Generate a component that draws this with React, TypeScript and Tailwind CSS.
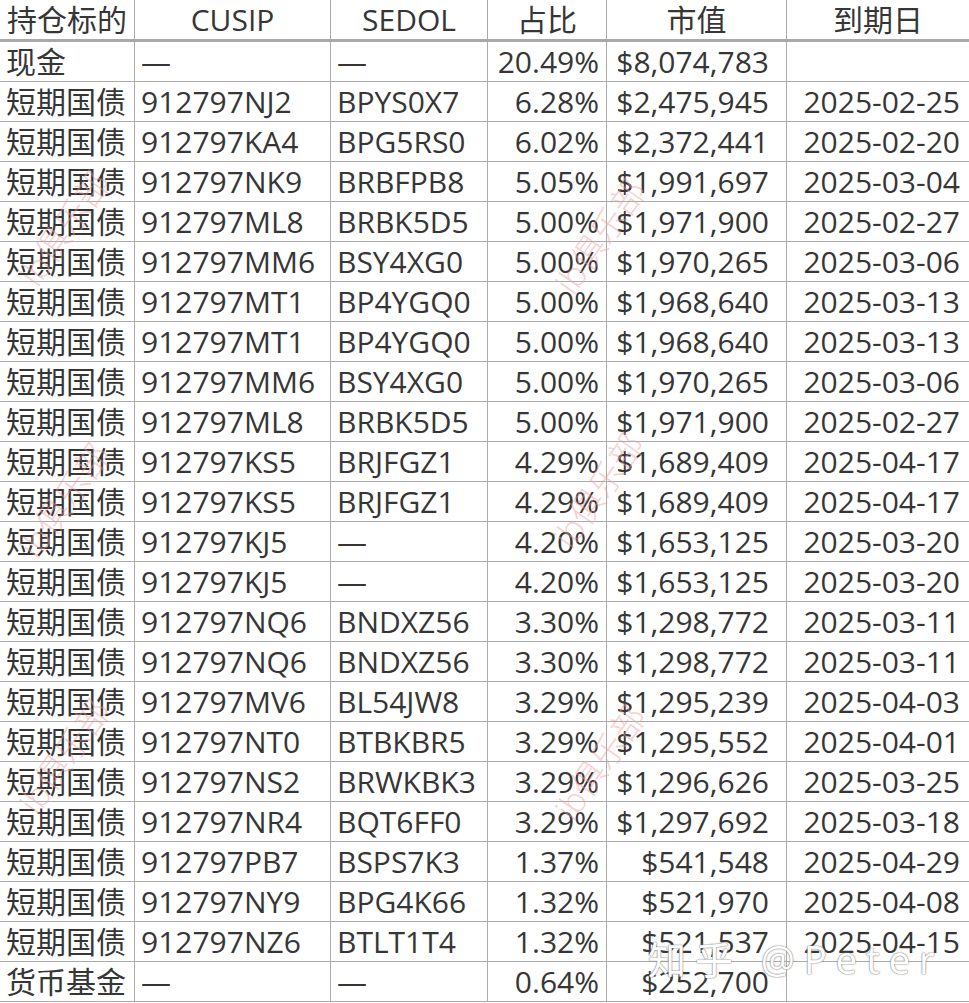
const rows: [string, string, string, string, string, string][] = [
  ["现金", "—", "—", "20.49%", "$8,074,783", ""],
  ["短期国债", "912797NJ2", "BPYS0X7", "6.28%", "$2,475,945", "2025-02-25"],
  ["短期国债", "912797KA4", "BPG5RS0", "6.02%", "$2,372,441", "2025-02-20"],
  ["短期国债", "912797NK9", "BRBFPB8", "5.05%", "$1,991,697", "2025-03-04"],
  ["短期国债", "912797ML8", "BRBK5D5", "5.00%", "$1,971,900", "2025-02-27"],
  ["短期国债", "912797MM6", "BSY4XG0", "5.00%", "$1,970,265", "2025-03-06"],
  ["短期国债", "912797MT1", "BP4YGQ0", "5.00%", "$1,968,640", "2025-03-13"],
  ["短期国债", "912797MT1", "BP4YGQ0", "5.00%", "$1,968,640", "2025-03-13"],
  ["短期国债", "912797MM6", "BSY4XG0", "5.00%", "$1,970,265", "2025-03-06"],
  ["短期国债", "912797ML8", "BRBK5D5", "5.00%", "$1,971,900", "2025-02-27"],
  ["短期国债", "912797KS5", "BRJFGZ1", "4.29%", "$1,689,409", "2025-04-17"],
  ["短期国债", "912797KS5", "BRJFGZ1", "4.29%", "$1,689,409", "2025-04-17"],
  ["短期国债", "912797KJ5", "—", "4.20%", "$1,653,125", "2025-03-20"],
  ["短期国债", "912797KJ5", "—", "4.20%", "$1,653,125", "2025-03-20"],
  ["短期国债", "912797NQ6", "BNDXZ56", "3.30%", "$1,298,772", "2025-03-11"],
  ["短期国债", "912797NQ6", "BNDXZ56", "3.30%", "$1,298,772", "2025-03-11"],
  ["短期国债", "912797MV6", "BL54JW8", "3.29%", "$1,295,239", "2025-04-03"],
  ["短期国债", "912797NT0", "BTBKBR5", "3.29%", "$1,295,552", "2025-04-01"],
  ["短期国债", "912797NS2", "BRWKBK3", "3.29%", "$1,296,626", "2025-03-25"],
  ["短期国债", "912797NR4", "BQT6FF0", "3.29%", "$1,297,692", "2025-03-18"],
  ["短期国债", "912797PB7", "BSPS7K3", "1.37%", "$541,548", "2025-04-29"],
  ["短期国债", "912797NY9", "BPG4K66", "1.32%", "$521,970", "2025-04-08"],
  ["短期国债", "912797NZ6", "BTLT1T4", "1.32%", "$521,537", "2025-04-15"],
  ["货币基金", "—", "—", "0.64%", "$252,700", ""],
];

const headers = ["持仓标的", "CUSIP", "SEDOL", "占比", "市值", "到期日"];

// 水印位置
const marks = [
  { left: 64, top: 228 },
  { left: 600, top: 236 },
  { left: 64, top: 500 },
  { left: 598, top: 490 },
  { left: 64, top: 756 },
  { left: 600, top: 762 },
];

const cell = "h-[40px] border-b border-r border-[#ababab] flex items-center";

export default function App() {
  return (
    <div
      className="relative w-[969px] h-[1003px] bg-white overflow-hidden text-[30px] leading-none text-[#363636]"
      style={{ fontFamily: '"Open Sans", "Noto Sans CJK SC", sans-serif' }}>
      <div className="grid grid-cols-[135px_196px_157px_119px_180px_182px]">
        {headers.map((h, i) => (
          <div
            key={h}
            className={`h-[42px] border-b-[3px] border-[#a9a9a9] flex items-center justify-center ${
              i < 5 ? "border-r" : ""
            }`}>
            {h}
          </div>
        ))}

        {rows.map((r, ri) => (
          <div key={ri} className="contents">
            <div className={`${cell} pl-[6px]`}>{r[0]}</div>
            <div className={`${cell} pl-[6px]`}>{r[1]}</div>
            <div className={`${cell} pl-[6px]`}>{r[2]}</div>
            <div className={`${cell} justify-end pr-[7px]`}>{r[3]}</div>
            <div className={`${cell} justify-end pr-[17px]`}>{r[4]}</div>
            <div className="h-[40px] border-b border-[#ababab] flex items-center justify-end pr-[9px]">
              {r[5]}
            </div>
          </div>
        ))}
      </div>

      {/* ib俱乐部 watermark */}
      {marks.map((m, i) => (
        <div
          key={i}
          className="absolute -translate-x-1/2 -translate-y-1/2 -rotate-[55deg] text-[34px] font-light text-[#ef9a9a] opacity-45 whitespace-nowrap pointer-events-none"
          style={{ left: m.left, top: m.top }}>
          ib俱乐部
        </div>
      ))}

      {/* 知乎 watermark */}
      <div className="absolute left-[648px] top-[940px] text-[38px] tracking-[9px] text-white whitespace-nowrap [text-shadow:0_0_2px_#8a8a8a,0_0_1px_#666]">
        知乎 @Peter
      </div>
    </div>
  );
}
